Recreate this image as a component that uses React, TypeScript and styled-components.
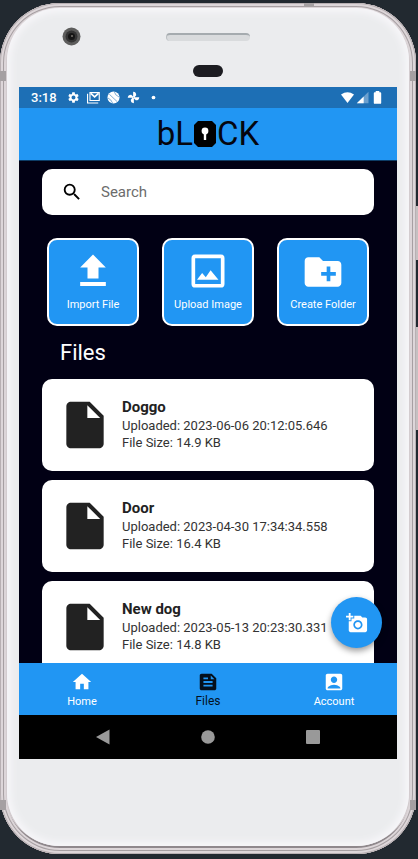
import React from "react";
import styled, { createGlobalStyle } from "styled-components";
import {
  MdAccountBox,
  MdCreateNewFolder,
  MdFeed,
  MdHome,
  MdInsertDriveFile,
  MdSearch,
  MdSettings,
} from "react-icons/md";

const blue = "#2196f3";
const night = "#010014";

const GlobalStyle = createGlobalStyle`
  * { box-sizing: border-box; }
  body { margin: 0; background: #222930; font-family: Roboto, sans-serif; }
  button, input { font: inherit; border: 0; background: none; padding: 0; color: inherit; }
  button { cursor: pointer; }
  h1, h2, h3, p, ul { margin: 0; padding: 0; font-weight: 400; }
`;

const Stage = styled.div`
  display: flex;
  height: 100vh;
  min-height: 560px;
  padding: 3px 2px 5px 0;
  position: relative;
`;

const SideKey = styled.span<{ $top: number; $height: number }>`
  position: absolute;
  right: 0;
  top: ${(p) => p.$top}px;
  width: 2px;
  height: ${(p) => p.$height}px;
  background: #c5c0c1;
`;

const Band = styled.span<{ $side: "left" | "right"; $low?: boolean }>`
  position: absolute;
  ${(p) => p.$side}: ${(p) => (p.$side === "left" ? 0 : 2)}px;
  ${(p) => (p.$low ? "bottom: 49px" : "top: 71px")};
  width: 6px;
  height: 10px;
  background: #a5a0a2;
`;

const TopBand = styled(Band)`
  top: 3px;
  right: 104px;
  width: 10px;
  height: 4px;
`;

const Rim = styled.div`
  flex: 1;
  display: flex;
  min-width: 0;
  padding: 5px 7px 8px;
  border-radius: 60px;
  background: #d3cccf;
  box-shadow: inset 0 0 0 1px #b8b0b3, inset 0 0 0 3px #ddd6d9, inset 0 0 0 4px #a69fa2,
    inset 0 0 0 6px #dcd5d8, inset 0 -4px 0 4px #8f888c;
`;

const Face = styled.div`
  flex: 1;
  display: flex;
  flex-direction: column;
  min-width: 0;
  padding: 0 12px;
  border-radius: 53px;
  background: #ebecee;
  box-shadow: inset 0 0 7px 4px #f7f6f9;
`;

const Forehead = styled.div`
  flex: none;
  height: 79px;
  display: grid;
  grid-template-columns: 1fr 84px 1fr;
  grid-template-rows: 57px 12px;
  justify-items: center;
  align-items: center;
`;

const Lens = styled.svg`
  justify-self: start;
  margin-left: 43px;
  width: 19px;
  height: 19px;
`;

const Speaker = styled.div`
  width: 84px;
  height: 8px;
  border-radius: 4px;
  background: #d9dbdd;
  border-top: 2px solid #a5abaf;
  border-left: 1px solid #b9bec1;
`;

const Sensor = styled.div`
  grid-column: 2;
  width: 30px;
  height: 12px;
  border-radius: 6px;
  background: #1c1c21;
`;

const Screen = styled.div`
  flex: 1;
  min-height: 0;
  display: flex;
  flex-direction: column;
  background: ${night};
`;

const Chin = styled.div`
  flex: none;
  height: 87px;
`;

const StatusBar = styled.div`
  flex: none;
  display: flex;
  align-items: center;
  gap: 7px;
  height: 21px;
  padding: 0 13px 0 12px;
  background: #1d6fb5;
  color: #fff;
  font-size: 13px;
  font-weight: 500;

  svg { width: 13px; height: 13px; flex: none; }
`;

const Clock = styled.time`
  margin-right: 3px;
`;

const Signals = styled.div`
  display: flex;
  align-items: center;
  gap: 2px;
  margin-left: auto;
`;

const TopBar = styled.header`
  flex: none;
  display: flex;
  align-items: center;
  justify-content: center;
  height: 53px;
  background: ${blue};
  border-bottom: 1px solid #0d3c66;
`;

const Logo = styled.h1`
  display: flex;
  align-items: center;
  gap: 1px;
  color: #05060f;
  font-family: Roboto, sans-serif;
  font-size: 33px;
  font-weight: 400;
  line-height: 40px;

  svg { width: 22px; height: 26px; }
`;

const Content = styled.main`
  flex: 1;
  min-height: 0;
  display: flex;
  flex-direction: column;
  padding: 8px 23px 0;
  position: relative;
`;

const SearchBox = styled.label`
  flex: none;
  display: flex;
  align-items: center;
  gap: 18px;
  height: 46px;
  padding: 0 19px;
  border-radius: 10px;
  background: #fff;
  color: #000;

  svg { width: 22px; height: 22px; flex: none; }
`;

const SearchInput = styled.input`
  flex: 1;
  min-width: 0;
  outline: none;
  font-size: 15px;
  &::placeholder { color: #6c6c6c; opacity: 1; }
`;

const Actions = styled.div`
  flex: none;
  display: grid;
  grid-template-columns: repeat(3, 1fr);
  gap: 23px;
  padding: 23px 5px 0;
`;

const ActionButton = styled.button`
  display: flex;
  flex-direction: column;
  align-items: center;
  gap: 3px;
  height: 88px;
  padding-top: 10px;
  border: 2px solid #fff;
  border-radius: 10px;
  background: ${blue};
  color: #fff;
  font-size: 11px;
  line-height: 16px;
  white-space: nowrap;

  svg { width: 44px; height: 44px; }
`;

const SectionTitle = styled.h2`
  flex: none;
  padding: 13px 18px 12px;
  color: #fff;
  font-size: 22px;
  line-height: 28px;
`;

const FileList = styled.ul`
  flex: 1;
  min-height: 0;
  overflow-y: auto;
  scrollbar-width: none;
  list-style: none;
  display: flex;
  flex-direction: column;
  gap: 9px;
`;

const FileCard = styled.li`
  flex: none;
  display: flex;
  align-items: center;
  gap: 9px;
  height: 92px;
  padding: 0 15px;
  border-radius: 10px;
  background: #fff;
  color: #222;

  svg { width: 56px; height: 56px; flex: none; }
`;

const FileInfo = styled.div`
  padding-bottom: 3px;
  font-size: 13px;
  line-height: 17px;
  color: #333;
`;

const FileName = styled.h3`
  font-size: 15px;
  line-height: 20px;
  font-weight: 700;
  color: #222;
`;

const Fab = styled.button`
  position: absolute;
  right: 15px;
  bottom: 15px;
  display: grid;
  place-items: center;
  width: 51px;
  height: 51px;
  border-radius: 50%;
  background: ${blue};
  color: #fff;
  box-shadow: 0 3px 6px rgba(0, 0, 0, 0.4);

  svg { width: 22px; height: 22px; }
`;

const TabBar = styled.nav`
  flex: none;
  display: grid;
  grid-template-columns: repeat(3, 1fr);
  height: 52px;
  background: ${blue};
`;

const Tab = styled.a<{ $active?: boolean }>`
  display: flex;
  flex-direction: column;
  align-items: center;
  padding-top: 8px;
  color: ${(p) => (p.$active ? "#04101c" : "#fff")};
  font-size: ${(p) => (p.$active ? 12 : 11)}px;
  line-height: ${(p) => (p.$active ? 16 : 18)}px;
  text-decoration: none;

  svg { width: 22px; height: 22px; }
`;

const SystemBar = styled.div`
  flex: none;
  display: grid;
  grid-template-columns: repeat(3, 1fr);
  height: 44px;
  padding: 0 31px;
  background: #000;
`;

const SystemKey = styled.button`
  display: grid;
  place-items: center;
  color: #999;

  svg { width: 16px; height: 16px; }
`;

const files = [
  { name: "Doggo", uploaded: "2023-06-06 20:12:05.646", size: "14.9 KB" },
  { name: "Door", uploaded: "2023-04-30 17:34:34.558", size: "16.4 KB" },
  { name: "New dog", uploaded: "2023-05-13 20:23:30.331", size: "14.8 KB" },
];

const MailIcon = () => (
  <svg viewBox="0 0 14 13" fill="none" stroke="#fff" aria-hidden="true">
    <path d="M.6 2.500v9.900h11.500" strokeWidth="1.200" />
    <path d="M3.200 9.800V1.300h10v8.500z" strokeWidth="1.200" />
    <path d="M4 2l4.200 3.900L12.400 2" strokeWidth="1.800" />
  </svg>
);

const BallIcon = () => (
  <svg viewBox="0 0 14 14" aria-hidden="true">
    <circle cx="7" cy="7" r="6.500" fill="#fff" />
    <path d="M2.500 3.500L11 11.500M8 1Q8.500 4.500 13 6.500M1 7.500Q4.500 9 6 13" fill="none" stroke="#1d6fb5" strokeWidth=".6" />
  </svg>
);

const PinwheelIcon = () => (
  <svg viewBox="0 0 14 14" fill="#fff" aria-hidden="true">
    <path d="M6.600 6.600V.8C9.200.9 10 2.500 9.900 4.500L8.200 6.600zM7.400 6.600h5.800c-.1 2.600-1.700 3.400-3.700 3.300L7.400 8.200zM7.400 7.400v5.800c-2.600-.1-3.400-1.700-3.300-3.700L5.800 7.400zM6.600 7.400H.8C.9 4.800 2.500 4 4.500 4.100L6.600 5.800z" />
  </svg>
);

const DotIcon = () => (
  <svg viewBox="0 0 14 14" fill="#fff" aria-hidden="true"><circle cx="7" cy="7" r="2" /></svg>
);

const WifiIcon = () => (
  <svg viewBox="0 0 14 13" fill="#fff" aria-hidden="true"><path d="M0 3.200Q7-1.400 14 3.200L7 12.400z" /></svg>
);

const CellIcon = () => (
  <svg viewBox="0 0 13 13" aria-hidden="true">
    <path d="M12.500.8v11.400H.8z" fill="#6ba0cf" />
    <path d="M7.700 5.600v6.600H.8z" fill="#fff" />
  </svg>
);

const BatteryIcon = () => (
  <svg viewBox="0 0 13 13" fill="#fff" aria-hidden="true">
    <path d="M4.700 0h3.600v1.300h1q.9 0 .9.9v9.700q0 .9-.9.9H3.700q-.9 0-.9-.9V2.200q0-.9.9-.9h1z" />
  </svg>
);

const LockMark = () => (
  <svg viewBox="0 0 22 26" role="img" aria-label="O">
    <path d="M4 0h14l4 4v18l-4 4H4l-4-4V4z" fill="#000" />
    <circle cx="11" cy="10" r="3.400" fill="#fff" />
    <path d="M9.800 12h2.400v7H9.800z" fill="#fff" />
  </svg>
);

const ImportIcon = () => (
  <svg viewBox="0 0 24 24" fill="currentColor" aria-hidden="true">
    <path d="M9 15.500h6v-6h4L12 2.500l-7 7h4zM5 17.500h14v2.200H5z" />
  </svg>
);

const PictureIcon = () => (
  <svg viewBox="0 0 24 24" aria-hidden="true">
    <rect x="4" y="3.500" width="16" height="16" rx="1" fill="none" stroke="#fff" strokeWidth="2" />
    <path d="M6 16.200l2.800-3.600 2 2.300 2.600-3.900 4.300 5.200z" fill="#fff" />
  </svg>
);

const AddPhotoIcon = () => (
  <svg viewBox="0 0 24 24" fill="currentColor" aria-hidden="true">
    <path d="M3 4V1h2v3h3v2H5v3H3V6H0V4h3zm3 6V7h3V4h7l1.830 2H21c1.100 0 2 .9 2 2v12c0 1.100-.9 2-2 2H5c-1.100 0-2-.9-2-2V10h3zm7 9c2.760 0 5-2.240 5-5s-2.240-5-5-5-5 2.240-5 5 2.240 5 5 5zm-3.200-5c0 1.770 1.430 3.200 3.200 3.200s3.200-1.430 3.200-3.200-1.430-3.200-3.200-3.200-3.200 1.430-3.200 3.200z" />
  </svg>
);

export default function App() {
  return (
    <>
      <GlobalStyle />
      <Stage>
        <SideKey $top={206} $height={54} />
        <SideKey $top={327} $height={103} />
        <Rim>
          <Face>
            <Forehead>
              <Lens viewBox="0 0 19 19" aria-hidden="true">
                <circle cx="9.500" cy="9.500" r="9" fill="#5d5d5c" />
                <circle cx="9.500" cy="9.500" r="6" fill="#343434" />
                <circle cx="9.500" cy="9.500" r="3.500" fill="#151515" />
                <circle cx="10" cy="9" r="1" fill="#77736d" />
              </Lens>
              <Speaker />
              <span />
              <Sensor />
            </Forehead>
            <Screen>
              <StatusBar>
                <Clock>3:18</Clock>
                <MdSettings />
                <MailIcon />
                <BallIcon />
                <PinwheelIcon />
                <DotIcon />
                <Signals>
                  <WifiIcon />
                  <CellIcon />
                  <BatteryIcon />
                </Signals>
              </StatusBar>
              <TopBar>
                <Logo>
                  <span>bL</span>
                  <LockMark />
                  <span>CK</span>
                </Logo>
              </TopBar>
              <Content>
                <SearchBox>
                  <MdSearch />
                  <SearchInput type="search" placeholder="Search" aria-label="Search" />
                </SearchBox>
                <Actions>
                  <ActionButton type="button"><ImportIcon />Import File</ActionButton>
                  <ActionButton type="button"><PictureIcon />Upload Image</ActionButton>
                  <ActionButton type="button"><MdCreateNewFolder />Create Folder</ActionButton>
                </Actions>
                <SectionTitle>Files</SectionTitle>
                <FileList>
                  {files.map((file) => (
                    <FileCard key={file.name}>
                      <MdInsertDriveFile />
                      <FileInfo>
                        <FileName>{file.name}</FileName>
                        <p>Uploaded: {file.uploaded}</p>
                        <p>File Size: {file.size}</p>
                      </FileInfo>
                    </FileCard>
                  ))}
                </FileList>
                <Fab type="button" aria-label="Add photo"><AddPhotoIcon /></Fab>
              </Content>
              <TabBar>
                <Tab href="#home"><MdHome />Home</Tab>
                <Tab href="#files" $active aria-current="page"><MdFeed />Files</Tab>
                <Tab href="#account"><MdAccountBox />Account</Tab>
              </TabBar>
              <SystemBar>
                <SystemKey type="button" aria-label="Back">
                  <svg viewBox="0 0 16 16" fill="currentColor"><path d="M14.500.5v15L1 8z" /></svg>
                </SystemKey>
                <SystemKey type="button" aria-label="Home screen">
                  <svg viewBox="0 0 16 16" fill="currentColor"><circle cx="8" cy="8" r="6.800" /></svg>
                </SystemKey>
                <SystemKey type="button" aria-label="Recent apps">
                  <svg viewBox="0 0 16 16" fill="currentColor"><rect x="1" y="1" width="14" height="14" rx="1" /></svg>
                </SystemKey>
              </SystemBar>
            </Screen>
            <Chin />
          </Face>
        </Rim>
        <Band $side="left" />
        <Band $side="right" />
        <Band $side="left" $low />
        <Band $side="right" $low />
        <TopBand $side="right" />
      </Stage>
    </>
  );
}
